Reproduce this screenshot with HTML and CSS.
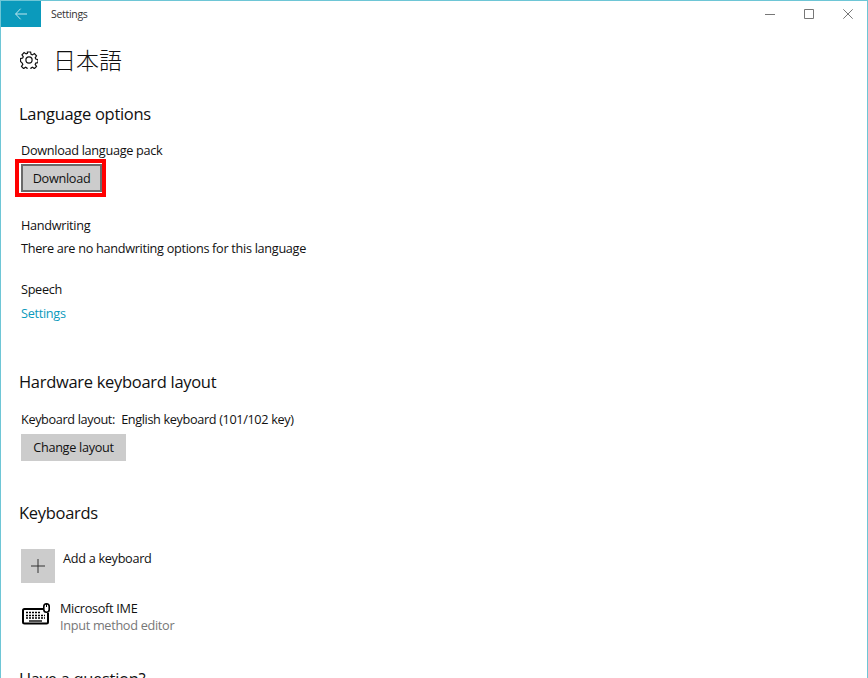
FILE: index.html
```html
<!DOCTYPE html>
<html lang="en">
<head>
<meta charset="utf-8">
<title>Settings</title>
<link rel="stylesheet" href="styles.css">
</head>
<body>
<div class="window">
  <header class="titlebar">
    <div class="back"><svg width="12" height="12" viewBox="0 0 12 12"><path d="M5.600.7.600 6l5 5.300M.6 6H12" fill="none" stroke="#bfe6ee" stroke-width="1"/></svg></div>
    <span class="apptitle">Settings</span>
    <div class="controls">
      <svg width="10" height="10" viewBox="0 0 10 10"><path d="M0 5.500H10" stroke="#777" stroke-width="1"/></svg>
      <svg width="10" height="10" viewBox="0 0 10 10"><path d="M.5.5h9v9h-9z" fill="none" stroke="#777"/></svg>
      <svg width="10" height="10" viewBox="0 0 10 10"><path d="M.3.3l9.400 9.400M9.700.3.3 9.700" stroke="#777" stroke-width="1"/></svg>
    </div>
  </header>
  <main class="content">
    <div class="pagehead">
      <svg class="gear" width="18" height="18" viewBox="0 0 18 18"><path d="M7.400 1h3.200l.5 2.300 1.300.6 2-1.300 2.100 2.200-1.300 2 .6 1.300 2.200.5v3.100l-2.200.4-.6 1.300 1.300 2-2.100 2.200-2-1.300-1.300.6-.5 2.100H7.400l-.5-2.100-1.300-.6-2 1.300-2.100-2.200 1.300-2-.6-1.300L.5 10.400V7.600l2.200-.5.6-1.300-1.300-2 2.100-2.200 2 1.300 1.300-.6z" fill="none" stroke="#111" stroke-width="1.200"/><circle cx="9" cy="9" r="3.100" fill="none" stroke="#111" stroke-width="1.200"/></svg>
      <h1>日本語</h1>
    </div>

    <h2 class="h-lang">Language options</h2>
    <p class="label">Download language pack</p>
    <div class="highlight"><button class="btn btn-focus">Download</button></div>
    <p class="label hw">Handwriting</p>
    <p class="label line2">There are no handwriting options for this language</p>
    <p class="label speech">Speech</p>
    <a class="link" href="#">Settings</a>

    <h2 class="h-hw">Hardware keyboard layout</h2>
    <p class="label kbline">Keyboard layout:&nbsp; English keyboard (101/102 key)</p>
    <button class="btn btn-layout">Change layout</button>

    <h2 class="h-kb">Keyboards</h2>
    <div class="addrow">
      <div class="plus"><svg width="14" height="14" viewBox="0 0 14 14"><path d="M7 0v14M0 7h14" stroke="#333" stroke-width="1"/></svg></div>
      <span class="addtext">Add a keyboard</span>
    </div>
    <div class="imerow">
      <svg class="kbicon" width="29" height="24" viewBox="0 0 29 24"><path d="M21 7H2.500a1.500 1.500 0 0 0-1.500 1.500V20a1.500 1.500 0 0 0 1.500 1.500h22a1.500 1.500 0 0 0 1.500-1.500V11" fill="none" stroke="#000" stroke-width="2"/><rect x="21.800" y="1.800" width="5.400" height="8.400" rx="2.700" fill="none" stroke="#000" stroke-width="1.600"/><path d="M24.500 2v3" stroke="#000"/><path d="M4 10.500h15M4 13.500h19M4 16h19" stroke="#000" stroke-width="1.400" stroke-dasharray="2 1"/><path d="M7 19h13" stroke="#000" stroke-width="1.400"/></svg>
      <div>
        <div class="imename">Microsoft IME</div>
        <div class="imesub">Input method editor</div>
      </div>
    </div>
    <h2 class="h-q">Have a question?</h2>
  </main>
</div>
</body>
</html>
```
FILE: styles.css
```css
* { box-sizing: border-box; }
html, body { margin: 0; height: 100%; overflow: hidden; }
body { background: #fff; font-family: "Open Sans", "Noto Sans CJK JP", sans-serif; color: #111; }
.window { width: 868px; height: 678px; border: 1px solid #6ec6d6; border-bottom: 0; overflow: hidden; background: #fff; }
.titlebar { height: 26px; display: flex; align-items: center; }
.back { width: 40px; height: 26px; background: #0b9abc; display: flex; align-items: center; justify-content: center; margin-right: 10px; }
.apptitle { font-size: 10.500px; letter-spacing: -.3px; color: #333; }
.controls { margin-left: auto; display: flex; gap: 29px; padding-right: 14px; }
.controls svg { display: block; }
.content { padding-left: 20px; }
.pagehead { display: flex; align-items: center; height: 40px; margin-top: 13px; margin-left: -1px; }
.gear { margin-right: 15px; }
h1 { margin: 0 0 2px; font-family: "Noto Sans CJK JP", sans-serif; font-weight: 300; font-size: 23px; line-height: 38px; color: #111; }
h2 { margin: 0; font-weight: 400; font-size: 16.500px; letter-spacing: -.3px; line-height: 22px; margin-left: -2px; color: #111; }
p { margin: 0; }
.label, .link, .btn, .addtext, .imename, .imesub { font-size: 12.700px; letter-spacing: -.3px; line-height: 18px; }
.label.kbline { letter-spacing: -.38px; word-spacing: .2px; }
.h-lang { margin-top: 23px; margin-bottom: 16px; }
.highlight { width: 91px; height: 38px; margin: 0 0 0 -6px; padding: 1px; border: 4px solid #f00; }
.btn { display: block; font-family: inherit; color: #111; background: #ccc; border: 0; padding: 0 0 2px; height: 27px; }
.btn-focus { width: 81px; height: 28px; margin-left: 1px; border: 2px solid #6a6a6a; padding: 0; }
.hw { margin-top: 19px; }
.line2 { margin-top: 5px; }
.speech { margin-top: 23px; }
.link { display: block; margin-top: 6px; color: #0b9abc; text-decoration: none; }
.h-hw { margin-top: 49px; margin-bottom: 17px; }
.btn-layout { width: 105px; margin-top: 6px; }
.h-kb { margin-top: 41px; }
.addrow { display: flex; margin-top: 25px; height: 34px; }
.plus { width: 34px; height: 34px; background: #ccc; display: flex; align-items: center; justify-content: center; }
.addtext { margin-left: 8px; }
.imerow { display: flex; margin-top: 16px; margin-left: 1px; }
.kbicon { margin-top: 3px; margin-right: 9px; }
.imesub { color: #777; margin-top: -1px; }
.h-q { margin-top: 34px; }
```
